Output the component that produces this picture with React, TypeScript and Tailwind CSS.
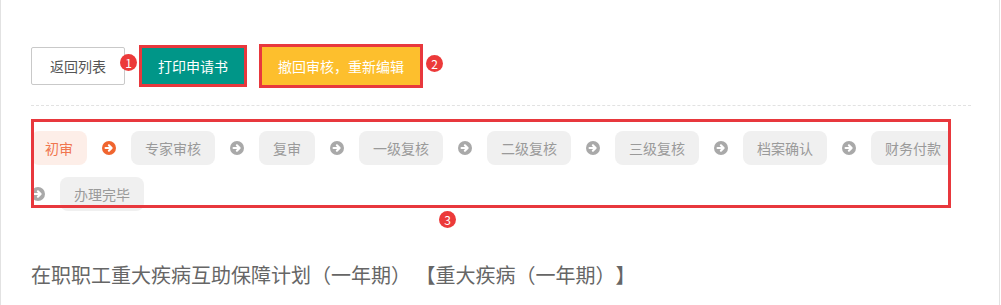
import React from "react";

const steps = [
  "初审",
  "专家审核",
  "复审",
  "一级复核",
  "二级复核",
  "三级复核",
  "档案确认",
  "财务付款",
  "办理完毕",
];

const Badge: React.FC<{ n: number; className: string }> = ({ n, className }) => (
  <span
    className={`absolute flex h-[17px] w-[17px] items-center justify-center rounded-full bg-[#ec3a3a] text-[12px] leading-none text-white ${className}`}
  >
    {n}
  </span>
);

const Arrow: React.FC<{ active?: boolean }> = ({ active }) => (
  <svg width="14" height="14" viewBox="0 0 14 14" className="mr-[15px] shrink-0">
    <circle cx="7" cy="7" r="7" fill={active ? "#f0652f" : "#a9a9a9"} />
    <path
      d="M3.6 7H9.4M6.9 4.3L9.6 7L6.9 9.7"
      fill="none"
      stroke="#fff"
      strokeWidth="2.2"
      strokeLinecap="round"
      strokeLinejoin="round"
    />
  </svg>
);

export default function App() {
  return (
    <div
      className="h-[305px] w-[1000px] overflow-hidden border-x border-[#e2e2e2] bg-white [text-spacing-trim:space-all]"
      style={{ fontFamily: '"Noto Sans CJK SC", "Liberation Sans", sans-serif' }}
    >
      <div className="ml-[30px] w-[940px] pt-[44px]">
        {/* action buttons */}
        <div className="relative flex items-center">
          <button className="h-[38px] rounded-[2px] border border-[#c9c9c9] bg-white px-[18px] text-[14px] text-[#555]">
            返回列表
          </button>
          <div className="ml-[14px] border-[3px] border-[#e8383d]">
            <button className="block h-[36px] bg-[#009688] px-4 text-[14px] text-white">
              打印申请书
            </button>
          </div>
          <div className="ml-[12px] border-[3px] border-[#e8383d]">
            <button className="block h-[38px] bg-[#fdbf2d] px-4 text-[14px] text-white">
              撤回审核，重新编辑
            </button>
          </div>
          <Badge n={1} className="left-[89px] top-[10px]" />
          <Badge n={2} className="left-[395px] top-[11px]" />
        </div>

        <div className="mt-[17px] border-t border-dashed border-[#e2e2e2]" />

        {/* process steps */}
        <div className="relative mt-[25px]">
          <div className="w-[920px] overflow-hidden">
            <div className="flex w-[940px] flex-wrap items-center gap-y-[12px]">
              {steps.map((s, i) => (
                <React.Fragment key={s}>
                  {i > 0 && <Arrow active={i === 1} />}
                  <span
                    className={`mr-[15px] flex h-[34px] shrink-0 items-center rounded-[8px] px-[14px] text-[14px] ${
                      i === 0
                        ? "bg-[#fdeee8] text-[#f0764f]"
                        : "bg-[#f0f0f0] text-[#9a9a9a]"
                    }`}
                  >
                    {s}
                  </span>
                </React.Fragment>
              ))}
            </div>
          </div>
          <div className="pointer-events-none absolute left-0 top-[-12px] h-[89px] w-[920px] border-[3px] border-[#e8383d]" />
          <Badge n={3} className="left-[408px] top-[80px]" />
        </div>

        <h2 className="mt-[50px] text-[20px] leading-[28px] text-[#666]">
          在职职工重大疾病互助保障计划（一年期） 【重大疾病（一年期）】
        </h2>
      </div>
    </div>
  );
}
